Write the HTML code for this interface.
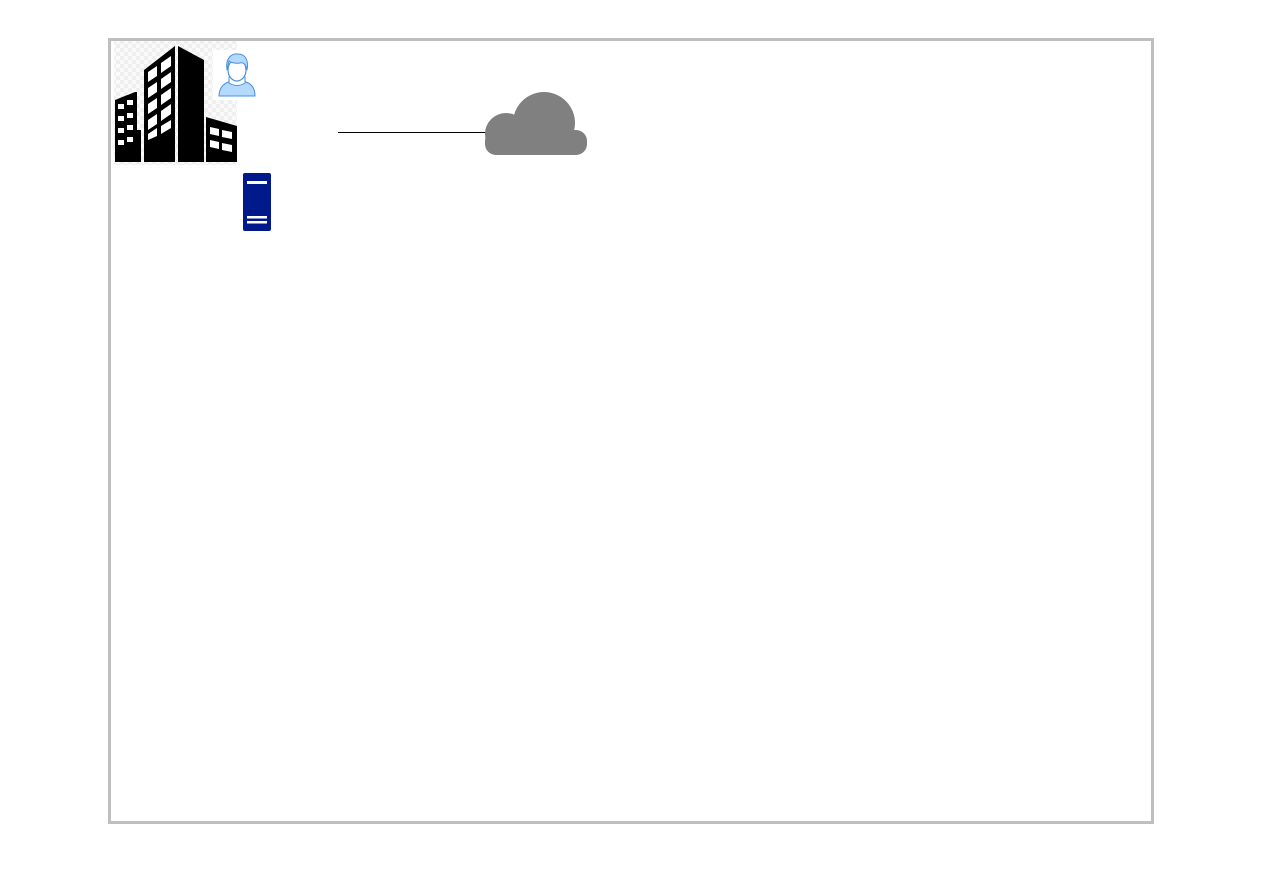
<!DOCTYPE html>
<html><head><style>
html,body{margin:0;padding:0;background:#fff;}
body{width:1263px;height:893px;position:relative;overflow:hidden;}
.frame{position:absolute;left:108px;top:38px;width:1040px;height:780px;border:3px solid #bfbfbf;}
</style></head><body>
<div class="frame"></div>
<svg width="1263" height="893" style="position:absolute;left:0;top:0">
<defs>
<pattern id="ck" width="8" height="8" patternUnits="userSpaceOnUse">
<rect width="8" height="8" fill="#fafafa"/><rect width="4" height="4" fill="#efefef"/><rect x="4" y="4" width="4" height="4" fill="#efefef"/>
</pattern>
</defs>
<rect x="114" y="41" width="123" height="124" fill="url(#ck)"/>
<rect x="213" y="50" width="45" height="50" fill="#fff"/>
<polygon points="115,162 115,100 135,92 137,92 137,130 141,130 141,162" fill="#000"/>
<polygon points="144,162 144,70 175,46 175,162" fill="#000"/>
<polygon points="178,162 178,46 204,60 204,162" fill="#000"/>
<polygon points="206,162 206,117 237,126 237,162" fill="#000"/>
<g fill="#fff">
<rect x="118" y="104" width="6" height="5"/><rect x="127" y="100" width="6" height="5"/>
<rect x="118" y="116" width="6" height="5"/><rect x="127" y="113" width="6" height="5"/>
<rect x="118" y="128" width="6" height="5"/><rect x="127" y="125" width="6" height="5"/>
<rect x="118" y="140" width="6" height="5"/><rect x="127" y="137" width="6" height="5"/>
<polygon points="148,72 157,66 157,76 148,82"/><polygon points="161,63 171,56 171,66 161,73"/>
<polygon points="148,88 157,82 157,92 148,98"/><polygon points="161,79 171,72 171,82 161,89"/>
<polygon points="148,104 157,98 157,108 148,114"/><polygon points="161,95 171,88 171,98 161,105"/>
<polygon points="148,120 157,114 157,124 148,130"/><polygon points="161,111 171,104 171,114 161,121"/>
<polygon points="148,134 157,128 157,136 148,140"/><polygon points="161,126 171,120 171,128 161,134"/>
<polygon points="210,127 219,129 219,136 210,134"/><polygon points="222,130 232,132 232,139 222,137"/>
<polygon points="210,140 219,142 219,149 210,147"/><polygon points="222,143 232,145 232,152 222,150"/>
</g>
<path d="M219,96 C219,86 226,82 232,81 L242,81 C249,82 255,86 255,96 Z" fill="#b3d9ff" stroke="#4a90d9" stroke-width="1"/>
<path d="M229,77 L229,83 Q237,88 245,83 L245,77 Z" fill="#fff" stroke="#4a90d9" stroke-width="1"/>
<ellipse cx="237" cy="70" rx="9" ry="11" fill="#fff" stroke="#4a90d9" stroke-width="1.2"/>
<path d="M227,70 C225,58 232,53 238,54 C245,54 249,60 247,70 C246,64 243,62 240,63 C235,64 230,62 229,61 C228,64 228,67 227,70 Z" fill="#b3d9ff" stroke="#4a90d9" stroke-width="1"/>
<rect x="243" y="173" width="28" height="58" rx="2" fill="#001a8c"/>
<rect x="247" y="181" width="20" height="3" fill="#fff"/>
<rect x="247" y="216" width="20" height="2.5" fill="#fff"/>
<rect x="247" y="221" width="20" height="2.5" fill="#fff"/>
<line x1="338" y1="132.5" x2="490" y2="132.5" stroke="#000" stroke-width="1"/>
<g fill="#808080">
<circle cx="506" cy="134" r="21"/>
<circle cx="544" cy="123" r="31"/>
<rect x="485" y="130" width="102" height="25" rx="11"/>
</g>
</svg>
</body></html>
